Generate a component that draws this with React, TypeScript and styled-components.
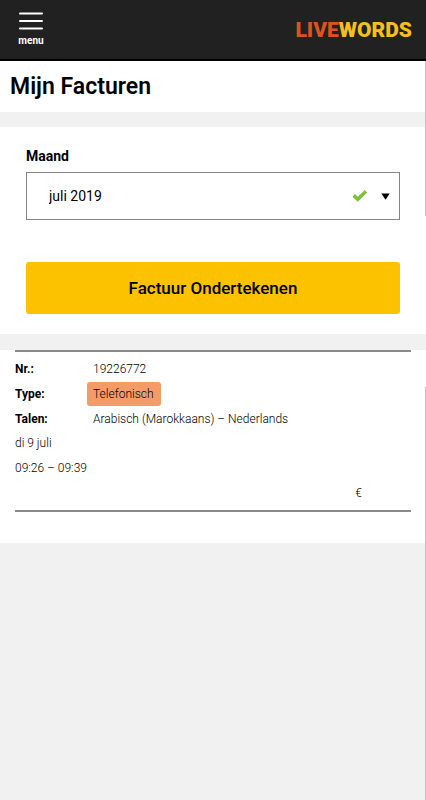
import React, { useState } from "react";
import styled, { createGlobalStyle } from "styled-components";

const GlobalStyle = createGlobalStyle`
  *, *::before, *::after { box-sizing: border-box; }
  body {
    margin: 0;
    background: #f1f1f1;
    color: #000;
    font-family: Roboto, "Liberation Sans", sans-serif;
  }
`;

const Page = styled.div`
  min-height: 100vh;
`;

const TopBar = styled.header`
  display: flex;
  align-items: center;
  justify-content: space-between;
  height: 61px;
  padding: 0 14px 0 18px;
  background: #212121;
  border-bottom: 2px solid #000;
`;

const MenuButton = styled.button`
  display: flex;
  flex-direction: column;
  align-items: center;
  gap: 3px;
  padding: 0;
  border: 0;
  background: none;
  color: #fff;
  font: 700 10px/14px Roboto, sans-serif;
  cursor: pointer;
`;

const Brand = styled.a`
  color: #f5c01f;
  font: 900 21px/24px Roboto, sans-serif;
  text-decoration: none;
`;

const BrandAccent = styled.span`
  color: #dc5320;
`;

const TitleBar = styled.div`
  padding: 10px;
  background: #fff;
`;

const Title = styled.h1`
  margin: 0;
  font-size: 23px;
  line-height: 31px;
  font-weight: 600;
`;

const Panel = styled.form`
  display: flex;
  flex-direction: column;
  margin: 15px 0 16px;
  padding: 20px 26px;
  background: #fff;
`;

const Label = styled.label`
  margin-bottom: 6px;
  font-size: 14px;
  line-height: 19px;
  font-weight: 700;
`;

const SelectField = styled.div`
  display: grid;
  align-items: center;
  margin-bottom: 42px;
`;

const MonthSelect = styled.select`
  grid-area: 1 / 1;
  width: 100%;
  height: 48px;
  padding: 0 60px 0 22px;
  appearance: none;
  border: 1px solid #858585;
  border-radius: 0;
  background: #fff;
  color: #000;
  font: 400 14px/20px Roboto, sans-serif;
`;

const SelectIcons = styled.span`
  grid-area: 1 / 1;
  justify-self: end;
  z-index: 1;
  display: flex;
  align-items: center;
  gap: 13px;
  padding-right: 10px;
  pointer-events: none;
`;

const SignButton = styled.button`
  height: 52px;
  padding: 0;
  border: 0;
  border-radius: 3px;
  background: #fcc200;
  color: #000;
  font: 500 17px/22px Roboto, sans-serif;
  cursor: pointer;
`;

const InvoiceSection = styled.main`
  padding: 0 15px 31px;
  background: #fff;
`;

const Invoice = styled.article`
  padding: 4px 0;
  border-top: 2px solid #8a8a8a;
  border-bottom: 2px solid #8a8a8a;
  font-size: 12px;
  font-weight: 300;
`;

const Details = styled.dl`
  display: grid;
  grid-template-columns: 78px 1fr;
  grid-auto-rows: 25px;
  align-items: center;
  margin: 0;
`;

const Term = styled.dt`
  font-weight: 700;
`;

const Value = styled.dd`
  margin: 0;
`;

const TypeTag = styled.span`
  display: inline-block;
  margin-left: -6px;
  padding: 0 7px 0 6px;
  border-radius: 3px;
  background: #f49b68;
  line-height: 24px;
`;

const Line = styled.p`
  margin: 0;
  line-height: 25px;
`;

const Amount = styled(Line)`
  padding-right: 49px;
  text-align: right;
`;

const ScrollEdge = styled.div<{ $from: string; $to: string }>`
  position: fixed;
  right: 0;
  top: ${(p) => p.$from};
  bottom: ${(p) => p.$to};
  width: 1px;
  background: #c4c4c4;
`;

const MenuIcon = () => (
  <svg width="26" height="20" viewBox="0 0 26 20" aria-hidden="true">
    <path
      d="M2 2.5h22M2 10h22M2 17.5h22"
      stroke="#fff"
      strokeWidth="2"
      strokeLinecap="round"
    />
  </svg>
);

const CheckIcon = () => (
  <svg width="16" height="14" viewBox="0 0 16 14" aria-hidden="true">
    <path d="M1.7 6.4 5.8 10.3 14 2.2" fill="none" stroke="#7dc13c" strokeWidth="3.6" />
  </svg>
);

const CaretIcon = () => (
  <svg width="9" height="7" viewBox="0 0 9 7" aria-hidden="true">
    <path d="M.3.6h8.4L4.5 6.8Z" fill="#000" />
  </svg>
);

const months = ["juni 2019", "juli 2019", "augustus 2019"];

export default function App() {
  const [month, setMonth] = useState("juli 2019");
  return (
    <Page>
      <GlobalStyle />
      <TopBar>
        <MenuButton type="button">
          <MenuIcon />
          menu
        </MenuButton>
        <Brand href="#">
          <BrandAccent>LIVE</BrandAccent>WORDS
        </Brand>
      </TopBar>
      <TitleBar>
        <Title>Mijn Facturen</Title>
      </TitleBar>
      <Panel onSubmit={(e) => e.preventDefault()}>
        <Label htmlFor="month">Maand</Label>
        <SelectField>
          <MonthSelect id="month" value={month} onChange={(e) => setMonth(e.target.value)}>
            {months.map((m) => (
              <option key={m}>{m}</option>
            ))}
          </MonthSelect>
          <SelectIcons>
            <CheckIcon />
            <CaretIcon />
          </SelectIcons>
        </SelectField>
        <SignButton type="submit">Factuur Ondertekenen</SignButton>
      </Panel>
      <InvoiceSection>
        <Invoice>
          <Details>
            <Term>Nr.:</Term>
            <Value>19226772</Value>
            <Term>Type:</Term>
            <Value>
              <TypeTag>Telefonisch</TypeTag>
            </Value>
            <Term>Talen:</Term>
            <Value>Arabisch (Marokkaans) – Nederlands</Value>
          </Details>
          <Line>di 9 juli</Line>
          <Line>09:26 – 09:39</Line>
          <Amount>€</Amount>
        </Invoice>
      </InvoiceSection>
      <ScrollEdge $from="61px" $to="73%" />
      <ScrollEdge $from="387px" $to="0" />
    </Page>
  );
}
